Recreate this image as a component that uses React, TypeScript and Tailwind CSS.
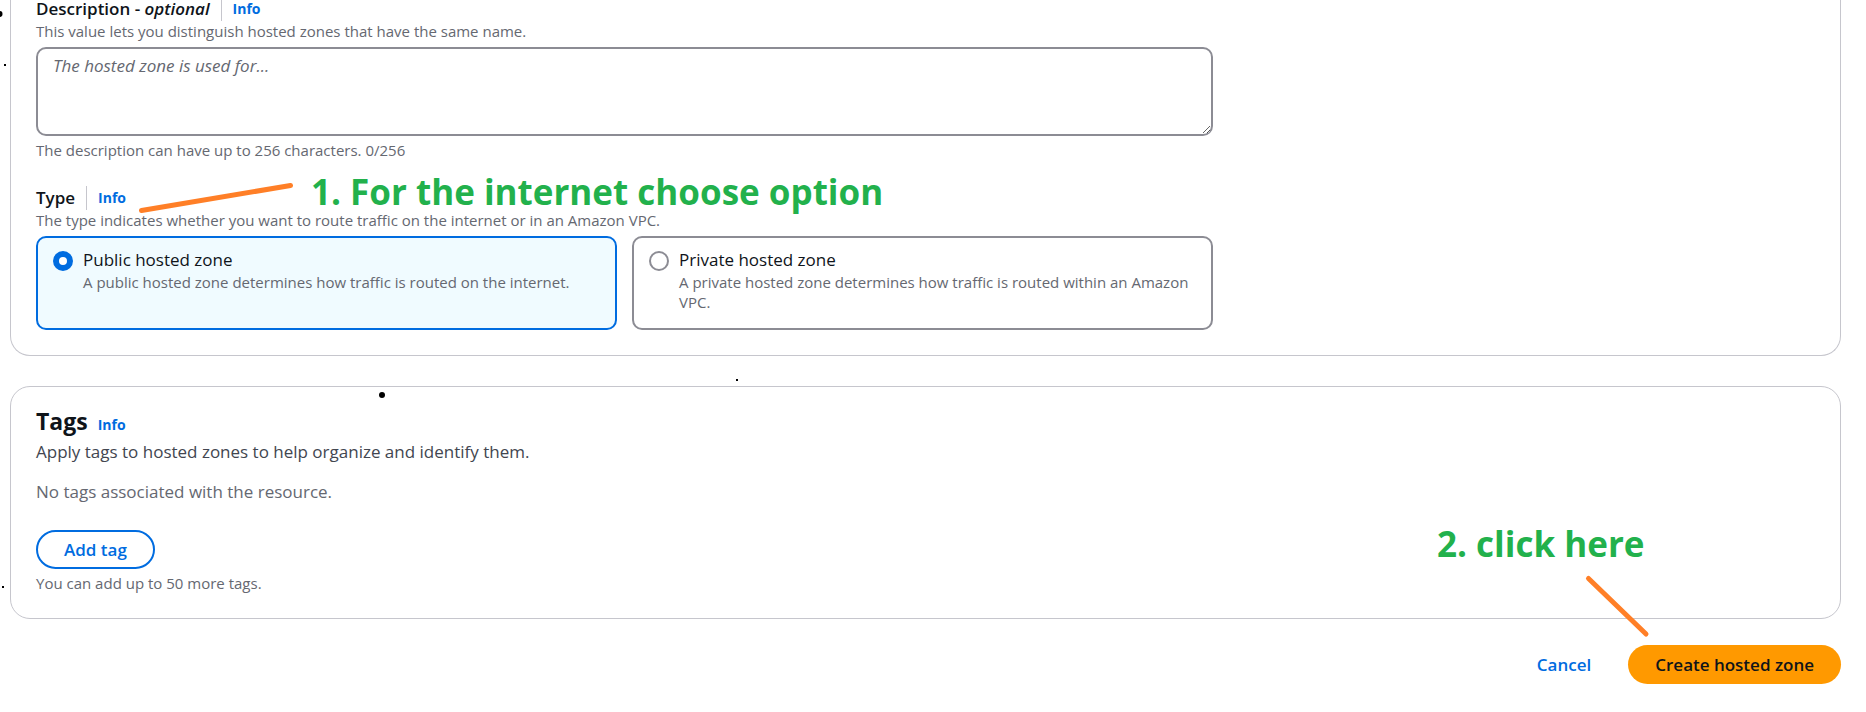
import React, { useState } from "react";

function InfoLink() {
  return (
    <a href="#info" className="text-[14px] font-bold text-[#006ce0]">
      Info
    </a>
  );
}

function FieldHeader({ children }: { children: React.ReactNode }) {
  return (
    <div className="flex h-6 items-stretch gap-[11px] leading-[23px]">
      {children}
      <span className="w-px bg-[#c6c6cd]" />
      <InfoLink />
    </div>
  );
}

type TileProps = {
  id: string;
  title: string;
  description: string;
  checked: boolean;
  onSelect: () => void;
};

function Tile({ id, title, description, checked, onSelect }: TileProps) {
  return (
    <label
      htmlFor={id}
      className={
        checked
          ? "flex gap-[10px] rounded-[10px] border-2 border-[#006ce0] bg-[#f0fbff] px-[15px] pt-[10px] pb-4"
          : "flex gap-[10px] rounded-[10px] border-2 border-[#8c8c94] bg-white px-[15px] pt-[10px] pb-4"
      }
    >
      <input
        id={id}
        type="radio"
        name="zone-type"
        checked={checked}
        onChange={onSelect}
        className="mt-[3px] size-5 shrink-0 appearance-none rounded-full border-2 border-[#8c8c94] bg-white checked:border-[6px] checked:border-[#006ce0]"
      />
      <span className="flex flex-col">
        <span className="text-[17px] leading-6 text-[#0f141a]">{title}</span>
        <span className="text-[15px] leading-5 text-[#656871]">{description}</span>
      </span>
    </label>
  );
}

function Annotations() {
  return (
    <div className="pointer-events-none absolute inset-0 overflow-hidden">
      <svg className="absolute top-0 left-0 h-[712px] w-[1866px]">
        <g stroke="#ff7f27" strokeWidth="5" strokeLinecap="round">
          <path d="M141.5 210.5 L290.5 185.5" />
          <path d="M1588.5 578.5 L1646 634" />
        </g>
        <g fill="#000">
          <circle cx="-0.5" cy="14" r="3" />
          <circle cx="382" cy="395" r="3" />
          <rect x="4" y="64" width="2" height="2" />
          <rect x="736" y="379" width="2" height="2" />
          <rect x="2" y="586" width="2" height="2" />
        </g>
      </svg>
      <p className="absolute top-[168px] left-[311px] text-[35px] leading-[48px] font-bold whitespace-nowrap text-[#22b14c]">
        1. For the internet choose option
      </p>
      <p className="absolute top-[520px] left-[1437px] text-[35px] leading-[48px] font-bold whitespace-nowrap text-[#22b14c]">
        2. click here
      </p>
    </div>
  );
}

export default function App() {
  const [zone, setZone] = useState("public");
  const [description, setDescription] = useState("");

  return (
    <div className="relative overflow-hidden bg-white pr-[25px] pb-7 pl-[10px] font-['Open_Sans','Noto_Sans',sans-serif] text-[#0f141a]">
      <section className="-mt-[3px] rounded-b-[20px] border border-t-0 border-[#c6c6cd] px-[25px] pb-[25px]">
        <div className="max-w-[1177px]">
          <FieldHeader>
            <label htmlFor="description" className="text-[17px] font-semibold">
              Description - <i>optional</i>
            </label>
          </FieldHeader>
          <p className="text-[15px] leading-5 text-[#656871]">
            This value lets you distinguish hosted zones that have the same name.
          </p>
          <textarea
            id="description"
            value={description}
            onChange={(e) => setDescription(e.target.value)}
            maxLength={256}
            placeholder="The hosted zone is used for..."
            className="mt-[6px] block h-[89px] w-full resize rounded-[10px] border-2 border-[#8c8c94] px-[15px] py-[5px] text-[17px] leading-6 placeholder:text-[#656871] placeholder:italic"
          />
          <p className="mt-1 text-[15px] leading-5 text-[#656871]">
            The description can have up to 256 characters. {description.length}/256
          </p>

          <div className="mt-[26px]">
            <FieldHeader>
              <h3 className="text-[17px] font-semibold">Type</h3>
            </FieldHeader>
          </div>
          <p className="text-[15px] leading-5 text-[#656871]">
            The type indicates whether you want to route traffic on the internet or in an Amazon VPC.
          </p>
          <div className="mt-[6px] grid grid-cols-2 gap-[15px]">
            <Tile
              id="zone-public"
              title="Public hosted zone"
              description="A public hosted zone determines how traffic is routed on the internet."
              checked={zone === "public"}
              onSelect={() => setZone("public")}
            />
            <Tile
              id="zone-private"
              title="Private hosted zone"
              description="A private hosted zone determines how traffic is routed within an Amazon VPC."
              checked={zone === "private"}
              onSelect={() => setZone("private")}
            />
          </div>
        </div>
      </section>

      <section className="mt-[30px] rounded-[20px] border border-[#c6c6cd] px-[25px] pt-[19px] pb-[25px]">
        <div className="flex items-baseline gap-[10px] leading-[30px]">
          <h2 className="text-[23px] font-bold">Tags</h2>
          <InfoLink />
        </div>
        <p className="text-[17px] leading-6 text-[#424650]">
          Apply tags to hosted zones to help organize and identify them.
        </p>
        <p className="mt-4 text-[17px] leading-6 text-[#656871]">No tags associated with the resource.</p>
        <button
          type="button"
          className="mt-[26px] block h-[39px] rounded-full border-2 border-[#006ce0] px-[26px] text-[17px] leading-6 font-semibold text-[#006ce0]"
        >
          Add tag
        </button>
        <p className="mt-1 text-[15px] leading-5 text-[#656871]">You can add up to 50 more tags.</p>
      </section>

      <div className="mt-[26px] flex items-center justify-end gap-[37px] text-[17px] leading-6 font-semibold">
        <button type="button" className="text-[#006ce0]">
          Cancel
        </button>
        <button type="submit" className="h-[39px] rounded-full bg-[#ff9900] px-[27px] text-[#0f141a]">
          Create hosted zone
        </button>
      </div>

      <Annotations />
    </div>
  );
}
